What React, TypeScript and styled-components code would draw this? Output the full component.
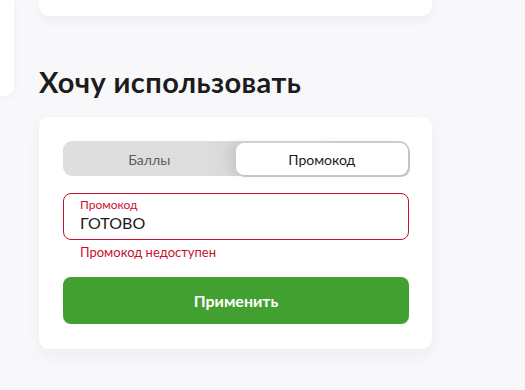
import React, { useState } from "react";
import styled, { createGlobalStyle } from "styled-components";

const Global = createGlobalStyle`
  html, body { margin: 0; padding: 0; background: #f8f8fb; }
  body { font-family: Lato, "Noto Sans", sans-serif; width: 525px; height: 390px; overflow: hidden; }
`;

const Page = styled.div`
  display: grid;
  grid-template-columns: 14px 393px;
  column-gap: 25px;
  height: 390px;
`;

const SideCard = styled.div`
  background: #fff;
  height: 96px;
  border-radius: 0 0 10px 0;
  box-shadow: 0 2px 10px rgba(30, 30, 60, 0.04);
`;

const Main = styled.div`
  display: flex;
  flex-direction: column;
`;

const TopCard = styled.div`
  background: #fff;
  height: 16px;
  border-radius: 0 0 10px 10px;
  box-shadow: 0 4px 12px rgba(30, 30, 60, 0.05);
`;

const Title = styled.h2`
  margin: 48px 0 0;
  font-size: 29px;
  line-height: 36px;
  font-weight: 700;
  color: #1c1c1c;
  letter-spacing: 0.4px;
`;

const Card = styled.div`
  margin-top: 17px;
  background: #fff;
  border-radius: 10px;
  padding: 24px 23px 25px 24px;
  display: flex;
  flex-direction: column;
  box-shadow: 0 6px 16px rgba(30, 30, 60, 0.05);
`;

const Tabs = styled.div`
  display: grid;
  grid-template-columns: 1fr 1fr;
  height: 35px;
  border-radius: 9px;
  background: linear-gradient(90deg, #dedede 0%, #dedede 40%, #d6d6d6 50%, #d0d0d0 100%);
  padding: 2px 1px 1px 0;
  box-sizing: border-box;
`;

const Tab = styled.button<{ $active?: boolean }>`
  border: none;
  font: inherit;
  font-size: 14px;
  cursor: pointer;
  border-radius: 8px;
  background: ${(p) => (p.$active ? "#fff" : "transparent")};
  color: ${(p) => (p.$active ? "#1c1c1c" : "#5c5c5c")};
  box-shadow: ${(p) => (p.$active ? "1px 1px 0 1px #c4c4c4, -6px 0 10px rgba(0,0,0,0.06)" : "none")};
  padding: 0;
`;

const Field = styled.label`
  margin-top: 17px;
  height: 47px;
  box-sizing: border-box;
  border: 1px solid #c8102e;
  border-radius: 8px;
  padding: 3px 16px 0;
  display: flex;
  flex-direction: column;
`;

const FieldLabel = styled.span`
  font-size: 12px;
  line-height: 15px;
  color: #c8102e;
`;

const Input = styled.input`
  border: none;
  outline: none;
  padding: 0;
  font: inherit;
  font-size: 16px;
  line-height: 22px;
  color: #1c1c1c;
  background: transparent;
`;

const ErrorText = styled.div`
  margin-top: 4px;
  padding-left: 17px;
  font-size: 13px;
  line-height: 16px;
  color: #c8102e;
`;

const Apply = styled.button`
  margin-top: 17px;
  height: 47px;
  border: none;
  border-radius: 8px;
  background: #41a030;
  color: #fff;
  font: inherit;
  font-size: 16px;
  font-weight: 700;
  cursor: pointer;
`;

export default function App() {
  const [tab, setTab] = useState<"points" | "promo">("promo");
  const [code, setCode] = useState("ГОТОВО");
  return (
    <>
      <Global />
      <Page>
        <SideCard />
        <Main>
          <TopCard />
          <Title>Хочу использовать</Title>
          <Card>
            <Tabs>
              <Tab $active={tab === "points"} onClick={() => setTab("points")}>Баллы</Tab>
              <Tab $active={tab === "promo"} onClick={() => setTab("promo")}>Промокод</Tab>
            </Tabs>
            <Field>
              <FieldLabel>Промокод</FieldLabel>
              <Input value={code} onChange={(e) => setCode(e.target.value)} />
            </Field>
            <ErrorText>Промокод недоступен</ErrorText>
            <Apply>Применить</Apply>
          </Card>
        </Main>
      </Page>
    </>
  );
}
